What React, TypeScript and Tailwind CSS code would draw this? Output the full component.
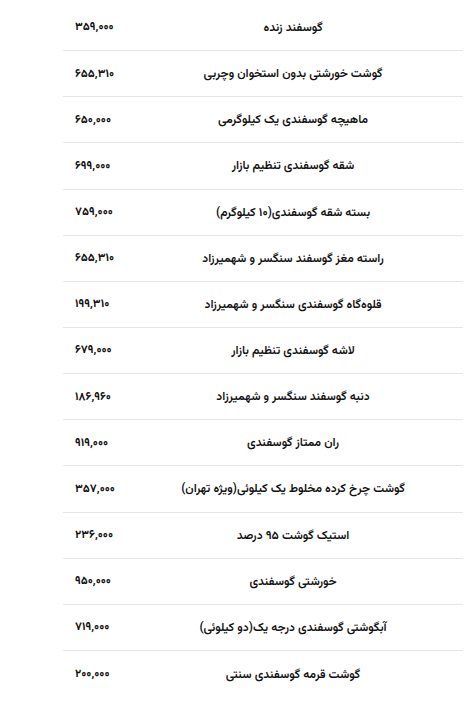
const rows: [string, string][] = [
  ["گوسفند زنده", "۳۵۹,۰۰۰"],
  ["گوشت خورشتی بدون استخوان وچربی", "۶۵۵,۳۱۰"],
  ["ماهیچه گوسفندی یک کیلوگرمی", "۶۵۰,۰۰۰"],
  ["شقه گوسفندی تنظیم بازار", "۶۹۹,۰۰۰"],
  ["بسته شقه گوسفندی(۱۰ کیلوگرم)", "۷۵۹,۰۰۰"],
  ["راسته مغز گوسفند سنگسر و شهمیرزاد", "۶۵۵,۳۱۰"],
  ["قلوه\u200cگاه گوسفندی سنگسر و شهمیرزاد", "۱۹۹,۳۱۰"],
  ["لاشه گوسفندی تنظیم بازار", "۶۷۹,۰۰۰"],
  ["دنبه گوسفند سنگسر و شهمیرزاد", "۱۸۶,۹۶۰"],
  ["ران ممتاز گوسفندی", "۹۱۹,۰۰۰"],
  ["گوشت چرخ کرده مخلوط یک کیلوئی(ویژه تهران)", "۳۵۷,۰۰۰"],
  ["استیک گوشت ۹۵ درصد", "۲۳۶,۰۰۰"],
  ["خورشتی گوسفندی", "۹۵۰,۰۰۰"],
  ["آبگوشتی گوسفندی درجه یک(دو کیلوئی)", "۷۱۹,۰۰۰"],
  ["گوشت قرمه گوسفندی سنتی", "۲۰۰,۰۰۰"],
];

export default function App() {
  return (
    <div className="w-[469px] h-[706px] bg-white pt-[5px] pl-[63px] pr-[6px] font-['Vazirmatn','Noto_Sans_Arabic','DejaVu_Sans',sans-serif]">
      <div dir="rtl" className="flex flex-col">
        {rows.map(([name, price], i) => (
          <div
            key={i}
            className={`grid grid-cols-[1fr_60px] items-center h-[46.15px] pt-[1px] ${i < rows.length - 1 ? "border-b border-[#e6e6e6]" : ""}`}
          >
            <div className="text-center text-[12px] font-semibold text-[#111]">{name}</div>
            <div dir="ltr" className="text-left pl-[12px] text-[11.5px] font-bold text-[#111]">{price}</div>
          </div>
        ))}
      </div>
    </div>
  );
}
